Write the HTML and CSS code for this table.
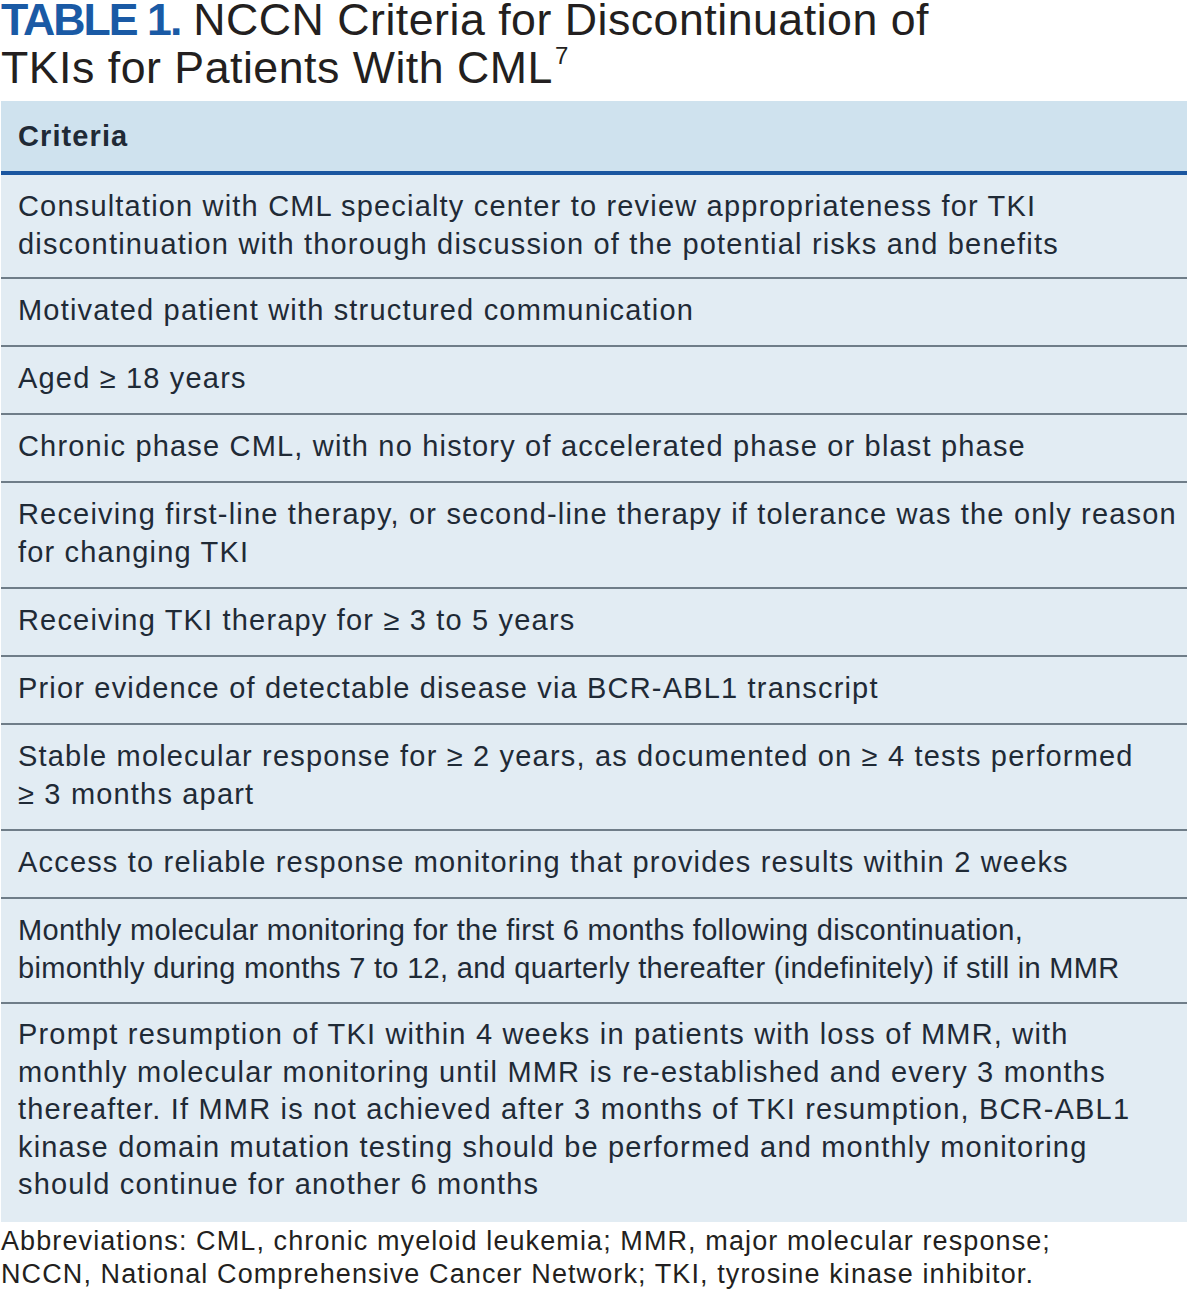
FILE: index.html
```html
<!DOCTYPE html>
<html>
<head>
<meta charset="utf-8">
<link rel="stylesheet" href="styles.css">
</head>
<body>
<div class="page">
  <h1 class="title"><span class="label">TABLE 1.</span> NCCN Criteria for Discontinuation of<br>TKIs for Patients With CML<sup>7</sup></h1>
  <div class="table">
    <div class="head">Criteria</div>
    <div class="row first">Consultation with CML specialty center to review appropriateness for TKI<br>discontinuation with thorough discussion of the potential risks and benefits</div>
    <div class="row">Motivated patient with structured communication</div>
    <div class="row">Aged ≥ 18 years</div>
    <div class="row">Chronic phase CML, with no history of accelerated phase or blast phase</div>
    <div class="row">Receiving first-line therapy, or second-line therapy if tolerance was the only reason<br>for changing TKI</div>
    <div class="row">Receiving TKI therapy for ≥ 3 to 5 years</div>
    <div class="row">Prior evidence of detectable disease via BCR-ABL1 transcript</div>
    <div class="row">Stable molecular response for ≥ 2 years, as documented on ≥ 4 tests performed<br>≥ 3 months apart</div>
    <div class="row">Access to reliable response monitoring that provides results within 2 weeks</div>
    <div class="row tight">Monthly molecular monitoring for the first 6 months following discontinuation,<br>bimonthly during months 7 to 12, and quarterly thereafter (indefinitely) if still in MMR</div>
    <div class="row last">Prompt resumption of TKI within 4 weeks in patients with loss of MMR, with<br>monthly molecular monitoring until MMR is re-established and every 3 months<br>thereafter. If MMR is not achieved after 3 months of TKI resumption, BCR-ABL1<br>kinase domain mutation testing should be performed and monthly monitoring<br>should continue for another 6 months</div>
  </div>
  <p class="foot">Abbreviations: CML, chronic myeloid leukemia; MMR, major molecular response;<br>NCCN, National Comprehensive Cancer Network; TKI, tyrosine kinase inhibitor.</p>
</div>
</body>
</html>
```
FILE: styles.css
```css
html, body {
  margin: 0;
  padding: 0;
  background: #ffffff;
}
.page {
  width: 1187px;
  font-family: "Liberation Sans", Arial, sans-serif;
  color: #231f20;
  padding-top: 1px;
}
.title {
  margin: -5px 0 0 0;
  padding: 0 0 0 1px;
  font-size: 44.7px;
  font-weight: normal;
  line-height: 48px;
  letter-spacing: 0.5px;
  color: #231f20;
}
.title .label {
  font-weight: bold;
  color: #1a5aa5;
  letter-spacing: -2px;
}
.title sup {
  font-size: 24px;
  line-height: 0;
  letter-spacing: 0;
  vertical-align: 19px;
  margin-left: 2px;
}
.table {
  margin: 9px 0 0 1px;
  background: #e2ecf3;
}
.head {
  background: #cfe2ee;
  font-weight: bold;
  font-size: 29px;
  letter-spacing: 1.1px;
  height: 70px;
  display: flex;
  align-items: center;
  padding-left: 17px;
  border-bottom: 4px solid #1a56a0;
  color: #1f2a36;
}
.row {
  font-size: 29px;
  line-height: 38px;
  letter-spacing: 1.18px;
  padding: 12px 12px 16px 17px;
  border-bottom: 2px solid #6f7d88;
  color: #1f2a36;
  white-space: nowrap;
}
.row.first {
  padding-bottom: 14px;
}
.row.tight {
  letter-spacing: 0.3px;
  padding-bottom: 15px;
}
.row.last {
  border-bottom: none;
  line-height: 37.5px;
  padding-bottom: 18px;
}
.foot {
  margin: 0;
  padding: 3px 0 0 1px;
  font-size: 27px;
  line-height: 33px;
  letter-spacing: 1.1px;
  color: #231f20;
  white-space: nowrap;
}
```
